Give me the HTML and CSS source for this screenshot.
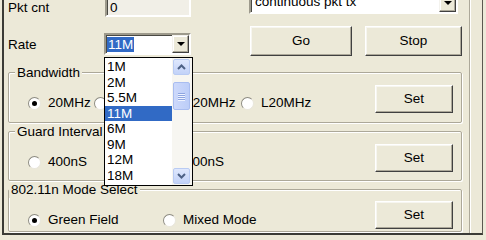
FILE: index.html
```html
<!DOCTYPE html>
<html>
<head>
<meta charset="utf-8">
<link rel="stylesheet" href="styles.css">
</head>
<body>
<div class="frame">
  <div class="panel">
    <div class="row row-top">
      <span class="label">Pkt cnt</span>
      <div class="field field-pkt">0</div>
      <div class="combo combo-mode">
        <span class="combo-text">continuous pkt tx</span>
        <span class="drop-btn"><i class="tri"></i></span>
      </div>
    </div>

    <div class="row row-rate">
      <span class="label label-rate">Rate</span>
      <div class="combo combo-rate">
        <span class="combo-text"><span class="sel">11M</span></span>
        <span class="drop-btn"><i class="tri"></i></span>
        <div class="dropdown">
          <div class="list">
            <div class="item">1M</div>
            <div class="item">2M</div>
            <div class="item">5.5M</div>
            <div class="item hl">11M</div>
            <div class="item">6M</div>
            <div class="item">9M</div>
            <div class="item">12M</div>
            <div class="item">18M</div>
          </div>
          <div class="scroll">
            <div class="sb-btn"><svg width="9" height="6" viewBox="0 0 9 6"><path d="M1 5 L4.5 1.5 L8 5" fill="none" stroke="#4d6185" stroke-width="2"/></svg></div>
            <div class="thumb"><span></span><span></span><span></span><span></span></div>
            <div class="sb-btn sb-down"><svg width="9" height="6" viewBox="0 0 9 6"><path d="M1 1 L4.5 4.5 L8 1" fill="none" stroke="#4d6185" stroke-width="2"/></svg></div>
          </div>
        </div>
      </div>
      <button class="btn btn-go">Go</button>
      <button class="btn btn-stop">Stop</button>
    </div>

    <div class="group group-bw">
      <span class="legend">Bandwidth</span>
      <div class="group-body">
        <div class="radios">
          <label class="radio on w-bw1"><i></i>20MHz</label>
          <label class="radio w-bw2"><i></i></label>
          <label class="radio w-bw3"><i></i>U20MHz</label>
          <label class="radio"><i></i>L20MHz</label>
        </div>
        <button class="btn btn-set">Set</button>
      </div>
    </div>

    <div class="group group-gi">
      <span class="legend">Guard Interval</span>
      <div class="group-body">
        <div class="radios">
          <label class="radio w-gi1"><i></i>400nS</label>
          <label class="radio"><i></i>800nS</label>
        </div>
        <button class="btn btn-set">Set</button>
      </div>
    </div>

    <div class="group group-mode">
      <span class="legend">802.11n Mode Select</span>
      <div class="group-body">
        <div class="radios">
          <label class="radio on w-md1"><i></i>Green Field</label>
          <label class="radio"><i></i>Mixed Mode</label>
        </div>
        <button class="btn btn-set">Set</button>
      </div>
    </div>
  </div>
  <div class="gutter"></div>
</div>
</body>
</html>
```

FILE: styles.css
```css
* { box-sizing: border-box; }
html, body { margin: 0; padding: 0; }
body {
  width: 486px;
  height: 237px;
  overflow: hidden;
  background: #ece9d8;
  font-family: "Liberation Sans", Arial, sans-serif;
  font-size: 13.5px;
  line-height: 16px;
  color: #000;
}

.frame {
  display: flex;
  margin-left: 2px;
  width: 481px;
  height: 235px;
  border-left: 2px solid #3b3b36;
  border-right: 1px solid #5a5850;
  border-bottom: 2px solid #3b3b36;
}
.panel {
  width: 466px;
  height: 233px;
  border-right: 1px solid #aca899;
}
.gutter {
  width: 12px;
  border-left: 1px solid #fff;
}

.row { display: flex; align-items: flex-start; }
.row-top { margin-top: -5px; height: 22px; }
.row-rate { margin-top: 9px; height: 30px; }

.label { width: 101px; padding-left: 4px; margin-top: 5px; }
.label-rate { width: 100px; margin-top: 11px; }

.field {
  width: 86px;
  height: 22px;
  background: #f1efe7;
  border: 2px solid;
  border-color: #9d9a8c #fff #fff #9d9a8c;
  box-shadow: inset 1px 1px 0 #4a4a44;
  padding: 3px 0 0 3px;
}

.combo {
  display: flex;
  height: 22px;
  background: #fff;
  border: 2px solid;
  border-color: #9d9a8c #fff #fff #9d9a8c;
  box-shadow: inset 1px 1px 0 #4a4a44;
}
.combo-mode { width: 209px; margin-left: 58px; margin-top: -3px; }
.combo-mode .combo-text { padding: 0 0 0 4px; white-space: nowrap; }
.combo-rate { width: 87px; margin-top: 7px; position: relative; }
.combo-rate .combo-text { padding: 2px 0 0 1px; }
.sel {
  display: inline-block;
  background: #316ac5;
  color: #fff;
  padding: 0 1px;
  line-height: 15px;
}

.drop-btn {
  margin-left: auto;
  width: 17px;
  height: 18px;
  background: #ece9d8;
  border: 1px solid;
  border-color: #f4f3ee #404040 #404040 #f4f3ee;
  box-shadow: inset -1px -1px 0 #aca899, inset 1px 1px 0 #fff;
  display: flex;
  align-items: center;
  justify-content: center;
}
.tri {
  width: 0;
  height: 0;
  border-left: 4px solid transparent;
  border-right: 4px solid transparent;
  border-top: 4px solid #000;
}

.btn {
  font: inherit;
  color: #000;
  background: #ece9d8;
  border: 1px solid;
  border-color: #fff #404040 #404040 #fff;
  box-shadow: inset -1px -1px 0 #aca899, inset 1px 1px 0 #f7f6f0;
  padding: 0;
}
.btn-go { width: 102px; height: 30px; margin-left: 59px; }
.btn-stop { width: 97px; height: 30px; margin-left: 13px; }
.btn-set { width: 78px; height: 28px; flex: none; }

.dropdown {
  position: absolute;
  left: -2px;
  top: 22px;
  width: 89px;
  height: 129px;
  border: 1px solid #000;
  background: #fff;
  display: flex;
  z-index: 5;
}
.list { flex: 1; padding-top: 1px; }
.item { height: 15.5px; line-height: 15.5px; padding-left: 2px; }
.item.hl { background: #316ac5; color: #fff; }

.scroll {
  width: 20px;
  background: #f7f6f1;
  display: flex;
  flex-direction: column;
  padding: 1px 2px 1px 1px;
}
.sb-btn {
  height: 16px;
  border-radius: 2px;
  background: linear-gradient(#dfe8fd, #c2d2f8);
  border: 1px solid #b9cbf3;
  display: flex;
  align-items: center;
  justify-content: center;
}
.sb-down { margin-top: auto; }
.thumb {
  margin-top: 7px;
  height: 28px;
  border-radius: 2px;
  background: linear-gradient(90deg, #cdd9fb, #bccdf8);
  border: 1px solid #a9bdf0;
  display: flex;
  flex-direction: column;
  align-items: center;
  justify-content: center;
  gap: 1px;
}
.thumb span { width: 7px; height: 1px; background: #8ea5e0; box-shadow: 0 1px 0 #eef3ff; }

.group {
  margin-left: 4px;
  width: 454px;
  border: 1px solid #aca899;
  border-radius: 2px;
  box-shadow: inset 1px 1px 0 #fff, 1px 1px 0 #fff;
  padding: 0 8px 0 19px;
}
.group-bw { margin-top: 16px; padding-bottom: 9px; }
.group-gi { margin-top: 8px; padding-bottom: 8px; }
.group-mode { margin-top: 8px; padding-bottom: 2px; }

.legend {
  display: block;
  width: max-content;
  height: 16px;
  margin-top: -8px;
  margin-left: -13px;
  padding: 0 2px;
  background: #ece9d8;
}
.group-mode .legend { margin-left: -19px; }

.group-body { display: flex; margin-top: 4px; }
.group-mode .group-body { margin-top: 3px; }
.radios { display: flex; flex: 1; padding-top: 10px; }
.group-mode .radios { padding-top: 11px; }

.radio { display: flex; align-items: center; white-space: nowrap; height: 16px; }
.radio i {
  width: 13px;
  height: 13px;
  border-radius: 50%;
  background: #fff;
  border: 1px solid;
  border-color: #8c8a80 #e8e6dc #e8e6dc #8c8a80;
  margin-right: 7px;
  display: flex;
  align-items: center;
  justify-content: center;
  flex: none;
}
.radio.on i::after {
  content: "";
  width: 5px;
  height: 5px;
  border-radius: 50%;
  background: #000;
}
.w-bw1 { width: 66px; }
.w-bw2 { width: 69px; }
.w-bw3 { width: 78px; }
.w-gi1 { width: 137px; }
.w-md1 { width: 135px; }
```
